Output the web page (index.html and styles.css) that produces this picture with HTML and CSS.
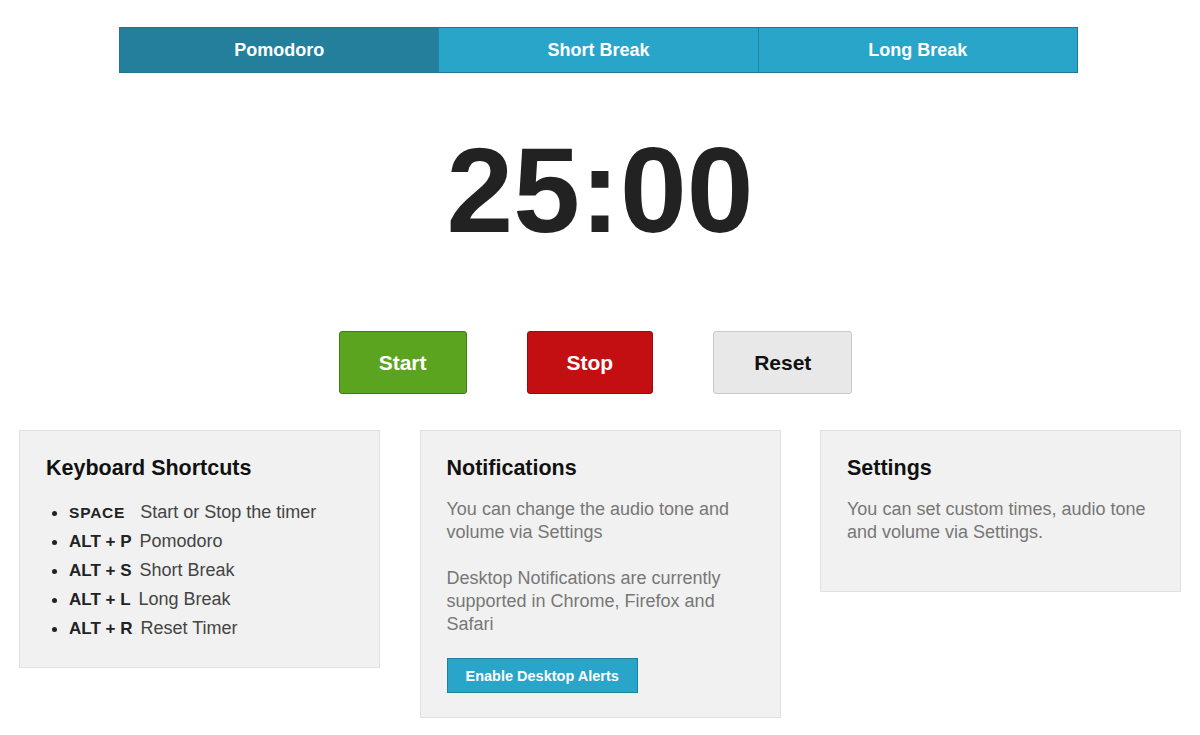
FILE: index.html
```html
<!DOCTYPE html>
<html lang="en">
<head>
<meta charset="utf-8">
<title>Pomodoro Timer</title>
<link rel="stylesheet" href="styles.css">
</head>
<body>
<div class="page">
  <nav class="tabs">
    <div class="tab active">Pomodoro</div>
    <div class="tab">Short Break</div>
    <div class="tab">Long Break</div>
  </nav>

  <div class="timer">25:00</div>

  <div class="controls">
    <button class="btn btn-start">Start</button>
    <button class="btn btn-stop">Stop</button>
    <button class="btn btn-reset">Reset</button>
  </div>

  <div class="cards">
    <section class="card">
      <h2 class="card-title">Keyboard Shortcuts</h2>
      <ul class="shortcuts">
        <li><span class="key key-space">SPACE</span> Start or Stop the timer</li>
        <li><span class="key">ALT + P</span> Pomodoro</li>
        <li><span class="key">ALT + S</span> Short Break</li>
        <li><span class="key">ALT + L</span> Long Break</li>
        <li><span class="key">ALT + R</span> Reset Timer</li>
      </ul>
    </section>
    <section class="card">
      <h2 class="card-title">Notifications</h2>
      <p class="card-text">You can change the audio tone and volume via Settings</p>
      <p class="card-text">Desktop Notifications are currently supported in Chrome, Firefox and Safari</p>
      <button class="alert-btn">Enable Desktop Alerts</button>
    </section>
    <section class="card">
      <h2 class="card-title">Settings</h2>
      <p class="card-text">You can set custom times, audio tone and volume via Settings.</p>
    </section>
  </div>
</div>
</body>
</html>
```

FILE: styles.css
```css
html, body {
  margin: 0;
  padding: 0;
  background: #ffffff;
}

body {
  font-family: "Liberation Sans", Arial, sans-serif;
  color: #222;
}

.page {
  width: 1200px;
  padding-top: 27px;
}

.tabs {
  display: flex;
  width: 959px;
  margin-left: 119px;
  border: 1px solid #1c7894;
  box-sizing: border-box;
}

.tab {
  flex: 1;
  height: 44px;
  line-height: 44px;
  text-align: center;
  background: #29a5ca;
  color: #ffffff;
  font-weight: bold;
  font-size: 18px;
  border-right: 1px solid #1f84a3;
}

.tab:last-child {
  border-right: none;
}

.tab.active {
  background: #237f9c;
}

.timer {
  margin-top: 57px;
  font-size: 120px;
  line-height: 120px;
  font-weight: bold;
  color: #222222;
  text-align: center;
}

.controls {
  display: flex;
  justify-content: center;
  gap: 60px;
  margin-top: 81px;
  padding-right: 9px;
}

.btn {
  height: 63px;
  padding: 0 39px;
  font-family: "Liberation Sans", Arial, sans-serif;
  font-size: 21px;
  font-weight: bold;
  border-radius: 3px;
  border: 1px solid;
  cursor: pointer;
}

.btn-start {
  background: #5ba420;
  border-color: #3d7d14;
  color: #ffffff;
}

.btn-stop {
  background: #c40f12;
  border-color: #980a0d;
  color: #ffffff;
}

.btn-reset {
  background: #e8e8e8;
  border-color: #c9c9c9;
  color: #111111;
  padding: 0 40px;
}

.cards {
  display: grid;
  grid-template-columns: 361px 361px 361px;
  column-gap: 39.5px;
  align-items: start;
  margin-top: 36px;
  margin-left: 19px;
}

.card {
  background: #f1f1f1;
  border: 1px solid #e1e1e1;
  padding: 25px 26px 24px 26px;
}

.card-title {
  margin: 0 0 18px;
  font-size: 21.5px;
  line-height: 24px;
  font-weight: bold;
  color: #111111;
}

.shortcuts {
  margin: 0;
  padding-left: 23px;
  font-size: 18px;
  line-height: 29px;
  color: #444444;
}

.shortcuts li::marker {
  color: #222;
}

.key {
  font-size: 17px;
  font-weight: bold;
  color: #222222;
  margin-right: 3px;
}

.key-space {
  font-size: 15.5px;
  letter-spacing: 0.8px;
  margin-right: 10px;
}

.card-text {
  margin: 0 0 23px;
  font-size: 18px;
  line-height: 23px;
  color: #777777;
}

.alert-btn {
  display: block;
  height: 35px;
  padding: 0 18px;
  margin-top: -1px;
  background: #29a5ca;
  color: #ffffff;
  font-family: "Liberation Sans", Arial, sans-serif;
  font-size: 14.5px;
  font-weight: bold;
  border: 1px solid #1f7f9c;
  border-radius: 0;
}
```
